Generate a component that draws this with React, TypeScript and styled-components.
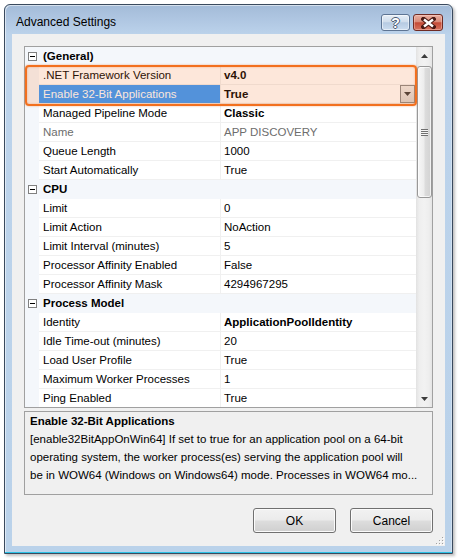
import React from "react";
import styled, { createGlobalStyle, css } from "styled-components";

const GlobalStyle = createGlobalStyle`
  html, body { margin: 0; padding: 0; background: #ffffff; }
  body {
    font-family: "Liberation Sans", Arial, sans-serif;
    font-size: 11.5px;
    color: #000;
  }
`;

const Desktop = styled.div`
  width: 458px;
  height: 558px;
  box-sizing: border-box;
  padding: 4px 0 0 4px;
  background: #ffffff;
`;

const Window = styled.div`
  width: 449px;
  height: 550px;
  box-sizing: border-box;
  border: 1px solid #3a4a5e;
  border-radius: 6px 6px 0 0;
  background: linear-gradient(to bottom, #a3bbd8 0px, #b2c9e4 18px, #bcd3eb 30px, #bad2ea 100%);
  box-shadow: inset 0 -1px 0 #2cc2e6, inset 1px 1px 0 rgba(255, 255, 255, 0.55),
    inset -1px 0 0 rgba(255, 255, 255, 0.35), 2px 2px 3px rgba(0, 0, 0, 0.25);
  display: flex;
  flex-direction: column;
`;

const TitleBar = styled.div`
  height: 29px;
  flex: none;
  display: flex;
  align-items: flex-start;
  padding: 0 9px 0 11px;
`;

const TitleText = styled.div`
  font-size: 12px;
  line-height: 15px;
  padding-top: 10px;
  color: #000;
`;

const CaptionButtons = styled.div`
  margin-left: auto;
  margin-top: 9px;
  display: flex;
  gap: 3px;
`;

const CaptionButton = styled.div<{ $kind: "help" | "close" }>`
  box-sizing: border-box;
  height: 17px;
  border-radius: 3px;
  display: flex;
  align-items: center;
  justify-content: center;
  ${(p) =>
    p.$kind === "help"
      ? css`
          width: 29px;
          border: 1px solid #5d7493;
          background: linear-gradient(to bottom, #e6eef7 0%, #d0ddec 45%, #b6cae2 52%, #cbdcef 100%);
          box-shadow: inset 0 0 0 1px rgba(255, 255, 255, 0.5);
        `
      : css`
          width: 30px;
          border: 1px solid #6f2b24;
          background: linear-gradient(to bottom, #eab0a2 0%, #d98a78 45%, #c44a36 52%, #d6735f 100%);
          box-shadow: inset 0 0 0 1px rgba(255, 220, 210, 0.4);
        `}
`;

const HelpGlyph = styled.span`
  font-family: "Liberation Sans", Arial, sans-serif;
  font-weight: bold;
  font-size: 14px;
  line-height: 14px;
  color: #ffffff;
  text-shadow: 1px 0 0 #4a5a72, -1px 0 0 #4a5a72, 0 1px 0 #4a5a72, 0 -1px 0 #4a5a72;
`;

const Client = styled.div`
  flex: 1;
  margin: 0 7px 7px 7px;
  background: #f0f0f0;
  display: flex;
  flex-direction: column;
  padding: 12px;
  position: relative;
  min-height: 0;
`;

const PropertyGrid = styled.div`
  height: 362px;
  box-sizing: border-box;
  border: 1px solid #a0a0a0;
  background: #ffffff;
  display: flex;
  position: relative;
  flex: none;
`;

const Rows = styled.div`
  flex: 1;
  overflow: hidden;
`;

const RowLine = styled.div`
  display: grid;
  grid-template-columns: 14px 182px 1fr;
  height: 19px;
`;

const MarginCell = styled.div`
  background: #f4f7fb;
  display: flex;
  align-items: center;
  justify-content: center;
`;

const CategoryCell = styled.div`
  grid-column: 2 / span 2;
  background: #f4f7fb;
  font-weight: bold;
  line-height: 19px;
  padding-left: 4px;
`;

const NameCell = styled.div<{ $selected?: boolean; $disabled?: boolean }>`
  box-sizing: border-box;
  height: 19px;
  line-height: 18px;
  padding-left: 4px;
  border-bottom: 1px solid #f0f0f0;
  border-right: 1px solid #f0f0f0;
  white-space: nowrap;
  overflow: hidden;
  color: ${(p) => (p.$selected ? "#ffffff" : p.$disabled ? "#6d6d6d" : "#000000")};
  background: ${(p) => (p.$selected ? "#3399ff" : "transparent")};
`;

const ValueCell = styled.div<{ $bold?: boolean; $disabled?: boolean }>`
  box-sizing: border-box;
  height: 19px;
  line-height: 18px;
  padding-left: 3px;
  border-bottom: 1px solid #f0f0f0;
  white-space: nowrap;
  display: flex;
  align-items: flex-start;
  font-weight: ${(p) => (p.$bold ? "bold" : "normal")};
  color: ${(p) => (p.$disabled ? "#6d6d6d" : "#000000")};
`;

const DropButton = styled.div`
  margin-left: auto;
  margin-right: 1px;
  width: 15px;
  height: 18px;
  box-sizing: border-box;
  border: 1px solid #8a8a8a;
  background: linear-gradient(to bottom, #eeedeb, #d8d6d3);
  display: flex;
  align-items: center;
  justify-content: center;
`;

const ExpandBox = styled.div`
  width: 9px;
  height: 9px;
  box-sizing: border-box;
  border: 1px solid #808080;
  background: #ffffff;
  display: flex;
  align-items: center;
  justify-content: center;
  &::after {
    content: "";
    width: 5px;
    height: 1px;
    background: #000;
  }
`;

const Highlight = styled.div`
  position: absolute;
  left: 0;
  top: 18px;
  width: 392px;
  height: 41px;
  box-sizing: border-box;
  border: 2px solid #f2701f;
  border-radius: 4px;
  background: rgba(242, 111, 33, 0.17);
  box-shadow: 0 0 2px rgba(242, 112, 31, 0.6), inset 0 0 2px rgba(242, 112, 31, 0.5);
  pointer-events: none;
`;

const ScrollBar = styled.div`
  width: 16px;
  flex: none;
  display: flex;
  flex-direction: column;
  background: linear-gradient(to right, #e2e2e2 0%, #eeeeee 20%, #f2f2f2 50%, #eeeeee 80%, #e4e4e4 100%);
`;

const ScrollArrow = styled.div`
  height: 17px;
  flex: none;
  display: flex;
  align-items: center;
  justify-content: center;
`;

const ScrollTrack = styled.div`
  flex: 1;
`;

const Thumb = styled.div`
  margin: 2px 0 0 1px;
  width: 15px;
  height: 132px;
  box-sizing: border-box;
  border: 1px solid #989898;
  border-radius: 3px;
  background: linear-gradient(to right, #f7f7f7 0%, #ededed 45%, #dcdcdc 55%, #d2d2d2 100%);
  box-shadow: inset 0 0 0 1px rgba(255, 255, 255, 0.7);
  display: flex;
  align-items: center;
  justify-content: center;
`;

const Gripper = styled.div`
  width: 7px;
  height: 7px;
  background: repeating-linear-gradient(to bottom, #6f6f6f 0px, #6f6f6f 1px, #f4f4f4 1px, #f4f4f4 2px);
`;

const DescBox = styled.div`
  margin-top: 3px;
  height: 84px;
  box-sizing: border-box;
  border: 1px solid #a0a0a0;
  padding: 0 5px;
  line-height: 18px;
  overflow: hidden;
  flex: none;
`;

const DescTitle = styled.div`
  font-weight: bold;
  white-space: nowrap;
`;

const DescLine = styled.div`
  white-space: nowrap;
`;

const Footer = styled.div`
  margin-top: 13px;
  display: flex;
  justify-content: flex-end;
  gap: 14px;
  flex: none;
`;

const DialogButton = styled.div`
  width: 83px;
  height: 25px;
  box-sizing: border-box;
  border: 1px solid #707070;
  border-radius: 3px;
  background: linear-gradient(to bottom, #f2f2f2 0%, #ebebeb 48%, #dddddd 52%, #cfcfcf 100%);
  box-shadow: inset 0 0 0 1px #fbfbfb;
  display: flex;
  align-items: center;
  justify-content: center;
  font-size: 12px;
  color: #000;
`;

const Grip = styled.svg`
  position: absolute;
  right: 1px;
  bottom: 1px;
`;

type Prop = {
  name: string;
  value: string;
  bold?: boolean;
  disabled?: boolean;
  selected?: boolean;
  drop?: boolean;
};

type Category = { title: string; props: Prop[] };

const data: Category[] = [
  {
    title: "(General)",
    props: [
      { name: ".NET Framework Version", value: "v4.0", bold: true },
      { name: "Enable 32-Bit Applications", value: "True", bold: true, selected: true, drop: true },
      { name: "Managed Pipeline Mode", value: "Classic", bold: true },
      { name: "Name", value: "APP DISCOVERY", disabled: true },
      { name: "Queue Length", value: "1000" },
      { name: "Start Automatically", value: "True" },
    ],
  },
  {
    title: "CPU",
    props: [
      { name: "Limit", value: "0" },
      { name: "Limit Action", value: "NoAction" },
      { name: "Limit Interval (minutes)", value: "5" },
      { name: "Processor Affinity Enabled", value: "False" },
      { name: "Processor Affinity Mask", value: "4294967295" },
    ],
  },
  {
    title: "Process Model",
    props: [
      { name: "Identity", value: "ApplicationPoolIdentity", bold: true },
      { name: "Idle Time-out (minutes)", value: "20" },
      { name: "Load User Profile", value: "True" },
      { name: "Maximum Worker Processes", value: "1" },
      { name: "Ping Enabled", value: "True" },
    ],
  },
];

const Arrow = ({ up }: { up?: boolean }) => (
  <svg width="7" height="4" viewBox="0 0 7 4">
    <path d={up ? "M0 4 L3.5 0 L7 4 Z" : "M0 0 L7 0 L3.5 4 Z"} fill="#3c3c3c" />
  </svg>
);

const CloseX = () => (
  <svg width="15" height="12" viewBox="0 0 15 12">
    <path d="M2.5 2 L12.5 10 M12.5 2 L2.5 10" stroke="#4a1a14" strokeWidth="4.5" strokeLinecap="square" />
    <path d="M3 2.5 L12 9.5 M12 2.5 L3 9.5" stroke="#ffffff" strokeWidth="2.4" />
  </svg>
);

export default function App() {
  return (
    <>
      <GlobalStyle />
      <Desktop>
        <Window>
          <TitleBar>
            <TitleText>Advanced Settings</TitleText>
            <CaptionButtons>
              <CaptionButton $kind="help">
                <HelpGlyph>?</HelpGlyph>
              </CaptionButton>
              <CaptionButton $kind="close">
                <CloseX />
              </CaptionButton>
            </CaptionButtons>
          </TitleBar>
          <Client>
            <PropertyGrid>
              <Rows>
                {data.map((cat) => (
                  <React.Fragment key={cat.title}>
                    <RowLine>
                      <MarginCell>
                        <ExpandBox />
                      </MarginCell>
                      <CategoryCell>{cat.title}</CategoryCell>
                    </RowLine>
                    {cat.props.map((p) => (
                      <RowLine key={p.name}>
                        <MarginCell />
                        <NameCell $selected={p.selected} $disabled={p.disabled}>
                          {p.name}
                        </NameCell>
                        <ValueCell $bold={p.bold} $disabled={p.disabled}>
                          {p.value}
                          {p.drop && (
                            <DropButton>
                              <Arrow />
                            </DropButton>
                          )}
                        </ValueCell>
                      </RowLine>
                    ))}
                  </React.Fragment>
                ))}
              </Rows>
              <ScrollBar>
                <ScrollArrow>
                  <Arrow up />
                </ScrollArrow>
                <ScrollTrack>
                  <Thumb>
                    <Gripper />
                  </Thumb>
                </ScrollTrack>
                <ScrollArrow>
                  <Arrow />
                </ScrollArrow>
              </ScrollBar>
              <Highlight />
            </PropertyGrid>
            <DescBox>
              <DescTitle>Enable 32-Bit Applications</DescTitle>
              <DescLine>
                [enable32BitAppOnWin64] If set to true for an application pool on a 64-bit
              </DescLine>
              <DescLine>
                operating system, the worker process(es) serving the application pool will
              </DescLine>
              <DescLine>
                be in WOW64 (Windows on Windows64) mode. Processes in WOW64 mo...
              </DescLine>
            </DescBox>
            <Footer>
              <DialogButton>OK</DialogButton>
              <DialogButton>Cancel</DialogButton>
            </Footer>
            <Grip width="8" height="8" viewBox="0 0 8 8">
              {[
                [6, 0],
                [6, 3],
                [3, 3],
                [6, 6],
                [3, 6],
                [0, 6],
              ].map(([x, y]) => (
                <React.Fragment key={`${x}-${y}`}>
                  <rect x={x + 1} y={y + 1} width="1" height="1" fill="#ffffff" />
                  <rect x={x} y={y} width="1" height="1" fill="#a0a0a0" />
                </React.Fragment>
              ))}
            </Grip>
          </Client>
        </Window>
      </Desktop>
    </>
  );
}
